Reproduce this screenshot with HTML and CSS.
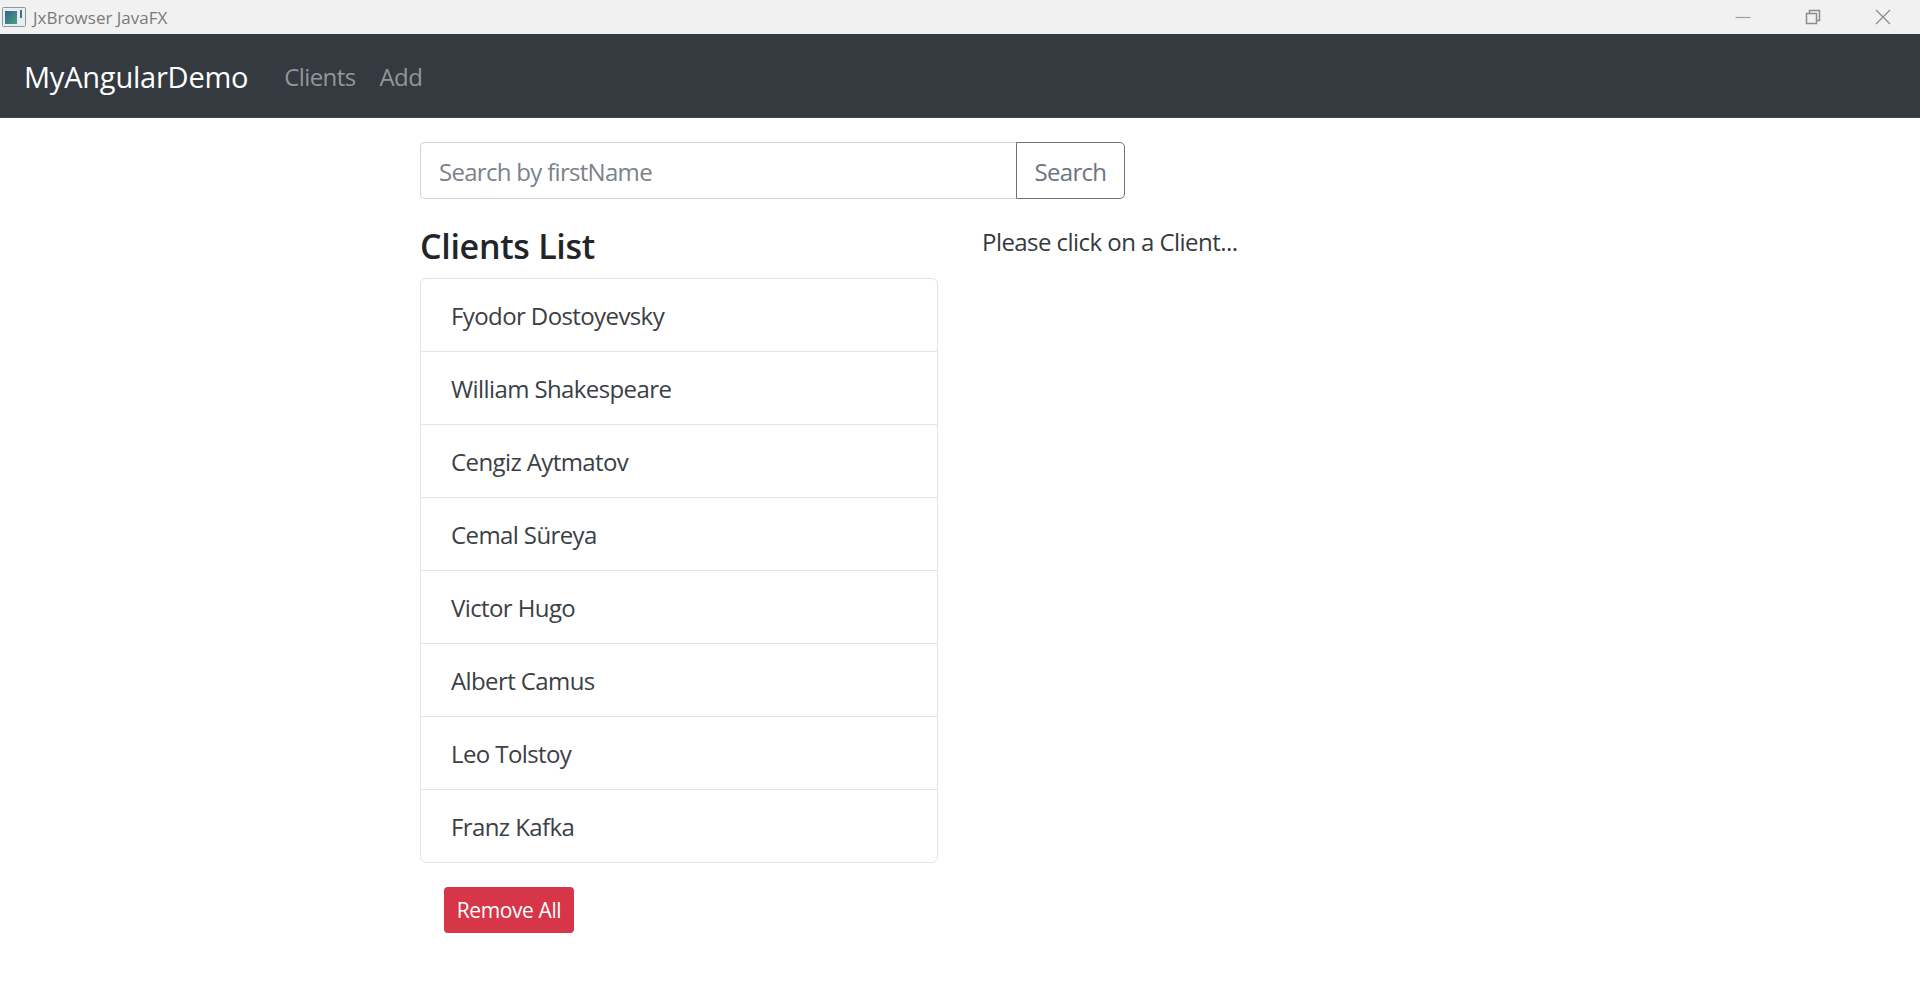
FILE: index.html
```html
<!DOCTYPE html>
<html lang="en">
<head>
<meta charset="utf-8">
<title>JxBrowser JavaFX</title>
<link rel="stylesheet" href="styles.css">
</head>
<body>
<header class="titlebar">
  <div class="titlebar-left">
    <svg class="app-icon" width="24" height="20" viewBox="0 0 24 20">
      <defs>
        <linearGradient id="screen" x1="0" y1="0" x2="1" y2="1">
          <stop offset="0" stop-color="#35618c"/>
          <stop offset="1" stop-color="#4aa37f"/>
        </linearGradient>
      </defs>
      <rect x="0.5" y="0.5" width="23" height="19" rx="1" fill="#e8edf0" stroke="#8a97a0"/>
      <rect x="3" y="4" width="12" height="13" fill="url(#screen)"/>
      <rect x="18" y="3" width="2" height="8" fill="#4a6b85"/>
    </svg>
    <span class="app-title">JxBrowser JavaFX</span>
  </div>
  <div class="window-controls">
    <svg width="16" height="16" viewBox="0 0 16 16"><path d="M0.5 8.5H15.5" stroke="#a0a0a0" stroke-width="1.2" fill="none"/></svg>
    <svg width="16" height="16" viewBox="0 0 16 16"><path d="M1.5 4.5H11.5V14.5H1.5Z M4.5 4.5V1.5H14.5V11.5H11.5" stroke="#8c8c8c" stroke-width="1.5" fill="none"/></svg>
    <svg width="16" height="16" viewBox="0 0 16 16"><path d="M1 1L15 15M15 1L1 15" stroke="#8c8c8c" stroke-width="1.3" fill="none"/></svg>
  </div>
</header>
<nav class="navbar">
  <a class="brand">MyAngularDemo</a>
  <a class="nav-link">Clients</a>
  <a class="nav-link">Add</a>
</nav>
<main class="container">
  <form class="search-row">
    <input class="search-input" type="text" placeholder="Search by firstName">
    <button class="search-btn" type="button">Search</button>
  </form>
  <div class="columns">
    <section class="list-col">
      <h4 class="list-title">Clients List</h4>
      <ul class="client-list">
        <li class="client-item">Fyodor Dostoyevsky</li>
        <li class="client-item">William Shakespeare</li>
        <li class="client-item">Cengiz Aytmatov</li>
        <li class="client-item">Cemal Süreya</li>
        <li class="client-item">Victor Hugo</li>
        <li class="client-item">Albert Camus</li>
        <li class="client-item">Leo Tolstoy</li>
        <li class="client-item">Franz Kafka</li>
      </ul>
      <button class="remove-btn" type="button">Remove All</button>
    </section>
    <section class="detail-col">
      <p class="hint">Please click on a Client...</p>
    </section>
  </div>
</main>
</body>
</html>
```
FILE: styles.css
```css
* { box-sizing: border-box; }
html, body { margin: 0; height: 100%; background: #fff; overflow: hidden; }
body { font-family: "Open Sans", "Noto Sans", "Liberation Sans", sans-serif; color: #343a40; }

.titlebar {
  height: 34px; background: #f1f1f1;
  display: flex; align-items: center; justify-content: space-between;
}
.titlebar-left { display: flex; align-items: center; gap: 7px; padding-left: 2px; }
.app-icon { display: block; }
.app-title { font-size: 17px; color: #7a7a7a; }
.window-controls { display: flex; align-items: center; gap: 54px; padding-right: 29px; }
.window-controls svg { display: block; }

.navbar {
  height: 84px; background: #343a40;
  display: flex; align-items: center; padding: 2px 24px 0;
  border-bottom: 1px solid #3f454b;
}
.brand { font-size: 29px; color: #fff; margin-right: 36px; letter-spacing: -0.22px; }
.nav-link { font-size: 24px; color: #92969a; margin-right: 24px; letter-spacing: -0.6px; }

.container { width: 1080px; margin: 0 auto; padding-top: 24px; }

.search-row { display: flex; height: 57px; width: 705px; }
.search-input {
  flex: 1; min-width: 0; height: 100%;
  border: 1.5px solid #ced4da; border-right: 0;
  border-radius: 5px 0 0 5px; padding: 2px 18px 0;
  font: 24px "Open Sans", "Noto Sans", sans-serif; letter-spacing: -0.7px; color: #495057; outline: none;
}
.search-input::placeholder { color: #7b8288; opacity: 1; }
.search-btn {
  width: 109px; height: 100%; background: #fff;
  border: 1.5px solid #6c757d; border-radius: 0 5px 5px 0; padding: 2px 0 0;
  font: 24px "Open Sans", "Noto Sans", sans-serif; letter-spacing: -0.7px; color: #6c757d;
}

.columns { display: flex; gap: 44px; padding-top: 24px; }
.list-col { width: 518px; }
.detail-col { flex: 1; }

.list-title {
  margin: 0; height: 55px; line-height: 46px;
  font-size: 34px; font-weight: 600; color: #212529; letter-spacing: -0.3px;
}
.client-list {
  list-style: none; margin: 0; padding: 0;
  border: 1.5px solid #e2e4e6; border-radius: 6px;
}
.client-item {
  height: 73px; padding: 0 30px; line-height: 74px;
  font-size: 24px; color: #3a4046; letter-spacing: -0.6px;
  border-bottom: 1.5px solid #e2e4e6;
}
.client-item:last-child { border-bottom: 0; height: 72px; }

.remove-btn {
  display: block; margin: 24px 0 0 24px; width: 130px; height: 46px;
  background: #d63648; border: 0; border-radius: 4px; color: #fff;
  font: 21px "Open Sans", "Noto Sans", sans-serif; letter-spacing: -0.4px;
}

.hint { margin: 0; font-size: 24px; line-height: 38px; color: #343a40; letter-spacing: -0.55px; }
```
